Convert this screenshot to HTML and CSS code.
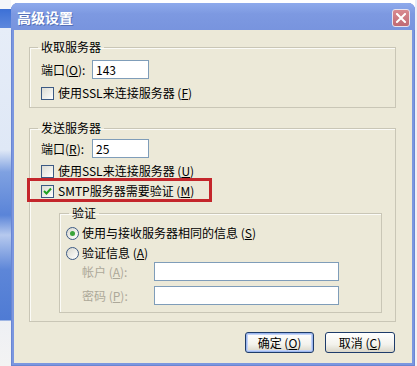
FILE: index.html
```html
<!DOCTYPE html>
<html lang="zh-CN">
<head>
<meta charset="utf-8">
<title>高级设置</title>
<link rel="stylesheet" href="styles.css">
</head>
<body>
<div class="screen">
  <div class="desk-left"></div>
  <div class="dialog">
    <div class="titlebar">
      <span class="title">高级设置</span>
      <span class="close">
        <svg width="10" height="10" viewBox="0 0 10 10"><path d="M1 1 L9 9 M9 1 L1 9" stroke="#fff" stroke-width="2" stroke-linecap="square"/></svg>
      </span>
    </div>
    <div class="client">
      <fieldset class="group g-recv">
        <legend>收取服务器</legend>
        <div class="port-row">
          <span class="lbl">端口(<u>O</u>):</span>
          <span class="input port">143</span>
        </div>
        <div class="check-row r1">
          <span class="cb"></span>
          <span>使用SSL来连接服务器 (<u>F</u>)</span>
        </div>
      </fieldset>

      <fieldset class="group g-send">
        <legend>发送服务器</legend>
        <div class="port-row">
          <span class="lbl">端口(<u>R</u>):</span>
          <span class="input port">25</span>
        </div>
        <div class="check-row r2">
          <span class="cb"></span>
          <span>使用SSL来连接服务器 (<u>U</u>)</span>
        </div>
        <div class="check-row r3">
          <span class="cb checked">
            <svg width="11" height="11" viewBox="0 0 11 11"><path d="M2 5 L4.5 7.5 L9 2.5" fill="none" stroke="#21a121" stroke-width="2"/></svg>
          </span>
          <span>SMTP服务器需要验证 (<u>M</u>)</span>
          <span class="highlight"></span>
        </div>

        <fieldset class="group g-auth">
          <legend>验证</legend>
          <div class="radio-row">
            <span class="rb on"><span class="dot"></span></span>
            <span>使用与接收服务器相同的信息 (<u>S</u>)</span>
          </div>
          <div class="radio-row rr2">
            <span class="rb"></span>
            <span>验证信息 (<u>A</u>)</span>
          </div>
          <div class="field-row f1">
            <span class="flbl">帐户 (<u>A</u>):</span>
            <span class="input wide"></span>
          </div>
          <div class="field-row f2">
            <span class="flbl">密码 (<u>P</u>):</span>
            <span class="input wide"></span>
          </div>
        </fieldset>
      </fieldset>

      <div class="buttons">
        <span class="btn default">确定 (<u>O</u>)</span>
        <span class="btn">取消 (<u>C</u>)</span>
      </div>
    </div>
  </div>
  <div class="desk-right"></div>
</div>
</body>
</html>
```

FILE: styles.css
```css
* { box-sizing: border-box; }
html, body { margin: 0; padding: 0; }
body {
  font-family: "Noto Sans CJK SC", "Noto Sans", sans-serif;
  font-size: 12px;
  color: #000;
  background: #fff;
}
.screen {
  width: 417px;
  height: 366px;
  display: flex;
  overflow: hidden;
}
.desk-left {
  width: 11px;
  flex: none;
  background: linear-gradient(to bottom,
    #f4f6fa 0, #f4f6fa 9px,
    #3c70d6 9px, #5d88dd 28px,
    #e6edf8 28px, #dfe8f6 150px,
    #7fa1e1 172px, #5a84d8 215px, #b6c9ee 235px, #5d86d8 270px,
    #4f7bd4 320px, #eef0f4 321px, #f3f3f3 366px);
}
.desk-right {
  width: 2px;
  flex: none;
  background: linear-gradient(to bottom, #e9eef8, #f2f2f6);
}
.dialog {
  width: 404px;
  flex: none;
  margin-top: 3px;
  height: 363px;
  display: flex;
  flex-direction: column;
  background: #7b97e0;
  border-radius: 7px 7px 0 0;
  padding: 0 3px 3px 3px;
  box-shadow: inset 1px 0 0 #6a86d2, inset -1px 0 0 #6a86d2, inset 0 -1px 0 #6a86d2;
}
.titlebar {
  height: 27px;
  flex: none;
  display: flex;
  align-items: center;
  justify-content: space-between;
  background: linear-gradient(to bottom, #8eaaec 0, #7d99e1 40%, #7894de 100%);
  margin: 0 -3px;
  padding: 0 5px 0 6px;
  border-radius: 7px 7px 0 0;
}
.title {
  color: #fff;
  font-weight: bold;
  font-size: 14px;
  line-height: 16px;
  text-shadow: 1px 1px 0 #5470b8;
  margin-top: 1px;
}
.close {
  width: 18px;
  height: 18px;
  border-radius: 3px;
  border: 1px solid #e7e3ee;
  background: linear-gradient(to bottom, #d88a90, #c06a74);
  display: flex;
  align-items: center;
  justify-content: center;
  margin-top: 3px;
}
.client {
  flex: 1;
  background: #ece9d8;
  display: flex;
  flex-direction: column;
}
.group {
  margin: 0;
  min-width: 0;
  border: 1px solid #c9c6b6;
  box-shadow: inset 1px 1px 0 #fbfbf7;
}
.group legend {
  font-size: 12px;
  line-height: 14px;
  padding: 0 3px;
  margin-left: -3px;
}
.g-recv {
  margin: 10px 16px 0 15px;
  padding: 6px 0 7px 11px;
}
.g-send {
  margin: 13px 16px 0 15px;
  padding: 4px 0 8px 11px;
}
.g-auth {
  margin: 8px 0 0 18px;
  width: 323px;
  padding: 6px 0 7px 6px;
}
.g-auth legend { margin-left: 3px; }
.port-row {
  display: flex;
  align-items: center;
  height: 19px;
}
.lbl {
  width: 51px;
  line-height: 14px;
}
.input {
  display: block;
  background: #fff;
  border: 1px solid #7f9db9;
  height: 19px;
  line-height: 17px;
  padding-left: 3px;
}
.port { width: 57px; }
.wide { width: 185px; }
.check-row {
  position: relative;
  display: flex;
  align-items: center;
  height: 14px;
  line-height: 14px;
  gap: 4px;
}
.r1 { margin-top: 7px; }
.r2 { margin-top: 6px; }
.r3 { margin-top: 6px; }
.cb {
  width: 13px;
  height: 13px;
  flex: none;
  border: 1px solid #3c5a84;
  background: linear-gradient(135deg, #dcdcd4 0%, #f4f4f0 70%, #fff 100%);
  display: flex;
  align-items: center;
  justify-content: center;
}
.highlight {
  position: absolute;
  left: -14px;
  top: -6px;
  width: 185px;
  height: 24px;
  border: 3px solid #c4262b;
}
.radio-row {
  display: flex;
  align-items: center;
  height: 14px;
  line-height: 14px;
  gap: 3px;
}
.rr2 { margin-top: 6px; }
.rb {
  width: 13px;
  height: 13px;
  flex: none;
  border-radius: 50%;
  border: 1px solid #3c5a84;
  background: linear-gradient(135deg, #d8d8d0 0%, #f4f4f0 70%, #fff 100%);
  display: flex;
  align-items: center;
  justify-content: center;
}
.dot {
  width: 5px;
  height: 5px;
  border-radius: 50%;
  background: #3aa43a;
}
.field-row {
  display: flex;
  align-items: center;
  height: 19px;
}
.f1 { margin-top: 2px; }
.f2 { margin-top: 5px; }
.flbl {
  width: 72px;
  margin-left: 16px;
  color: #aca899;
  line-height: 14px;
}
.buttons {
  display: flex;
  justify-content: flex-end;
  gap: 11px;
  margin-top: 10px;
  padding-right: 17px;
}
.btn {
  width: 70px;
  height: 21px;
  border: 1px solid #1e3c6a;
  border-radius: 3px;
  background: linear-gradient(to bottom, #ffffff 0%, #f3f2ec 60%, #d9d6c8 100%);
  display: flex;
  align-items: center;
  justify-content: center;
  line-height: 14px;
}
.btn.default {
  width: 69px;
  box-shadow: inset 0 0 0 1px #9cb7ee, inset 0 0 0 2px #c3d3f7;
}
u { text-decoration: underline; text-underline-offset: 1px; }
```
